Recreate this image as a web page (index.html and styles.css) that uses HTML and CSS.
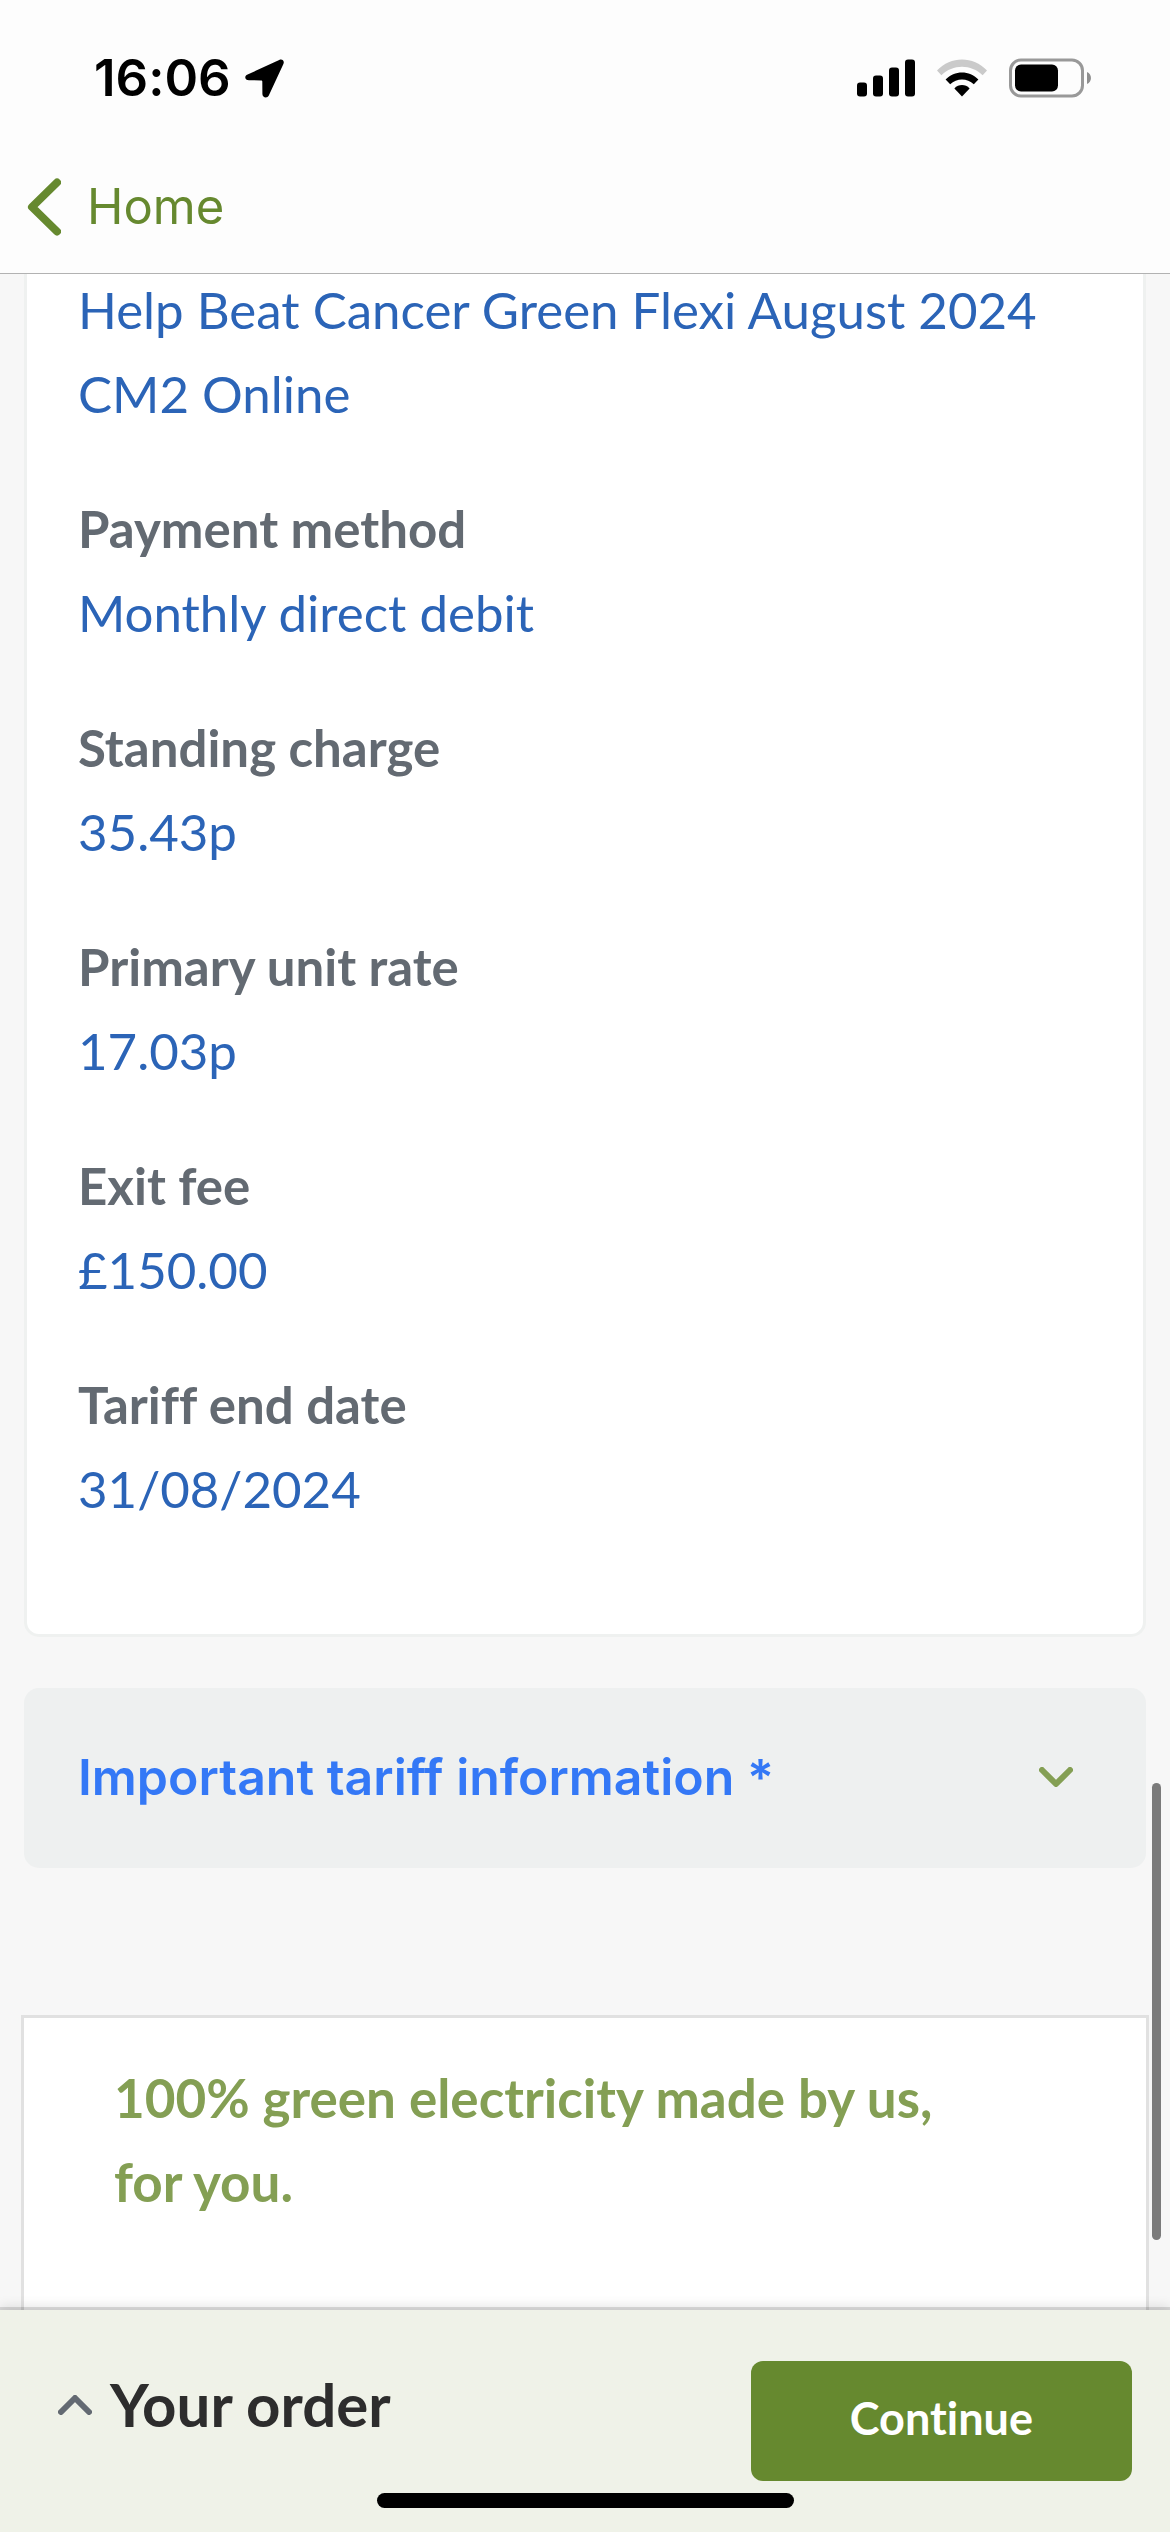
FILE: index.html
```
<!DOCTYPE html>
<html lang="en">
  <head>
    <meta charset="UTF-8" />
    <meta name="viewport" content="width=device-width, initial-scale=1" />
    <title>Your tariff</title>
    <link rel="stylesheet" href="styles.css">
  </head>
  <body>
    <header class="top-bar">
      <div class="status-bar">
        <div class="status-left">
          <span class="time">16:06</span>
          <svg class="location-icon" width="39" height="39" viewBox="0 0 39 39" aria-hidden="true">
            <path d="M2.6 15.6 L34.2 .9 C37.2 -.5 39.8 1.9 38.4 5.1 L23.8 36.6 C22.4 39.6 17.4 39 17.4 35 L17.3 22.6 C17.3 21.7 17 21.4 16.1 21.4 L4 21.3 C-.1 21.2 -1.2 17.3 2.6 15.6 Z" />
          </svg>
        </div>
        <div class="status-right">
          <!-- Signal strength -->
          <svg width="58" height="38" viewBox="0 0 58 38" aria-hidden="true">
            <rect x="0" y="23.5" width="10" height="14" rx="3" />
            <rect x="16" y="16.5" width="10" height="21" rx="3" />
            <rect x="32" y="8.5" width="10" height="29" rx="3" />
            <rect x="48" y="0.5" width="10" height="37" rx="3" />
          </svg>
          <!-- Wifi -->
          <svg width="50" height="38" viewBox="0 0 50 38" aria-hidden="true">
            <path d="M0 11.5 C13.7 -3.3 36.3 -3.3 50 11.5 L45.6 16.2 C34.2 4.8 15.8 4.8 4.4 16.2 Z" fill="#cacaca" />
            <path d="M8.6 20.5 C17.5 11.1 32.5 11.1 41.4 20.5 L36.8 25.2 C30.3 18.9 19.7 18.9 13.2 25.2 Z" />
            <path d="M17.4 29.4 C21.6 25 28.4 25 32.6 29.4 L25 37.6 Z" />
          </svg>
          <!-- Battery -->
          <svg width="82" height="40" viewBox="0 0 82 40" aria-hidden="true">
            <rect x="1.5" y="2" width="72" height="36" rx="10.5" fill="none" stroke="#999" stroke-width="3" />
            <rect x="6" y="6.5" width="43" height="27" rx="6" />
            <path d="M78 14 C83.3 16.3 83.3 23.7 78 26 Z" fill="#8f8f8f" />
          </svg>
        </div>
      </div>
      <nav class="nav-bar">
        <a href="#" class="back-link">
          <svg width="34" height="58" viewBox="0 0 34 58" aria-hidden="true">
            <path d="M30 4.5 L5 29 L30 53.5" />
          </svg>
          Home
        </a>
      </nav>
    </header>

    <main class="content">
      <section class="tariff-card">
        <dl class="tariff-list">
          <dd>Help Beat Cancer Green Flexi August 2024 CM2 Online</dd>
          <dt>Payment method</dt>
          <dd>Monthly direct debit</dd>
          <dt>Standing charge</dt>
          <dd>35.43p</dd>
          <dt>Primary unit rate</dt>
          <dd>17.03p</dd>
          <dt>Exit fee</dt>
          <dd>£150.00</dd>
          <dt>Tariff end date</dt>
          <dd>31/08/2024</dd>
        </dl>
      </section>

      <button type="button" class="info-panel">
        Important tariff information *
        <svg width="34" height="20" viewBox="0 0 34 20" aria-hidden="true">
          <path d="M3 3 L17 17 L31 3" />
        </svg>
      </button>

      <section class="green-card">
        <h2>100% green electricity made by us, for you.</h2>
      </section>

      <div class="scroll-thumb"></div>
    </main>

    <footer class="order-bar">
      <div class="order-row">
        <button type="button" class="order-toggle">
          <svg width="34" height="20" viewBox="0 0 34 20" aria-hidden="true">
            <path d="M3 17 L17 3 L31 17" />
          </svg>
          Your order
        </button>
        <button type="button" class="continue-button">Continue</button>
      </div>
      <div class="home-indicator"></div>
    </footer>
  </body>
</html>
```
FILE: styles.css
```
* {
  box-sizing: border-box;
}

body {
  margin: 0;
  height: 100vh;
  display: flex;
  flex-direction: column;
  overflow: hidden;
  background: #f7f7f7;
  font-family: Lato, sans-serif;
  font-size: 51px;
  line-height: 84px;
  font-variant-ligatures: none;
}

button {
  border: none;
  font-family: inherit;
  font-variant-ligatures: none;
  cursor: pointer;
}

svg {
  display: block;
  flex-shrink: 0;
}

/* Status bar and navigation */
.top-bar {
  flex-shrink: 0;
  background: #fdfdfd;
  border-bottom: 1px solid #b2b2b2;
  font-family: Inter, sans-serif;
}

.status-bar {
  display: flex;
  justify-content: space-between;
  align-items: center;
  padding: 36px 79px 21px 94px;
}

.status-left {
  display: flex;
  align-items: center;
  gap: 14px;
}

.time {
  font-size: 51px;
  font-weight: 600;
}

.status-right {
  display: flex;
  align-items: center;
  gap: 22px;
}

.nav-bar {
  display: flex;
  padding: 24px 27px;
}

.back-link {
  display: flex;
  align-items: center;
  gap: 26px;
  color: #66892f;
  font-size: 49px;
  text-decoration: none;
}

.back-link svg {
  fill: none;
  stroke: #66892f;
  stroke-width: 8;
  stroke-linecap: round;
  stroke-linejoin: round;
}

/* Scrolling content */
.content {
  position: relative;
  flex: 1;
  min-height: 0;
  overflow: hidden;
}

.tariff-card {
  margin: -6px 24px 51px;
  padding: 0 51px 52px;
  background: #fff;
  border: 3px solid #eff1f0;
  border-top: none;
  border-radius: 0 0 15px 15px;
}

.tariff-list {
  margin: 0;
}

.tariff-list dt {
  color: #636a72;
  font-weight: 700;
}

.tariff-list dd {
  margin: 0 0 51px;
  color: #2b64b7;
}

.info-panel {
  display: flex;
  justify-content: space-between;
  align-items: center;
  width: calc(100% - 48px);
  margin: 0 24px 147px;
  padding: 47px 73px 49px 54px;
  background: #eef0f0;
  border-radius: 15px;
  color: #3478f6;
  font-family: Inter, sans-serif;
  font-size: 50px;
  font-weight: 600;
  line-height: 84px;
}

.info-panel svg {
  fill: none;
  stroke: #849f54;
  stroke-width: 6;
  stroke-linecap: round;
  stroke-linejoin: round;
}

.green-card {
  margin: 0 21px;
  padding: 38px 180px 180px 90px;
  background: #fff;
  border: 3px solid #e1e1e1;
}

.green-card h2 {
  margin: 0;
  color: #849f54;
  font-size: 53px;
  font-weight: 700;
}

.scroll-thumb {
  position: absolute;
  right: 9px;
  bottom: 70px;
  width: 9px;
  height: 457px;
  background: #7b7b7b;
  border-radius: 5px;
}

/* Order bar */
.order-bar {
  position: relative;
  flex-shrink: 0;
  padding: 51px 0 24px;
  background: #eff2e8;
  box-shadow: 0 -3px 0 rgba(0, 0, 0, 0.12), 0 -3px 12px rgba(0, 0, 0, 0.12);
}

.order-row {
  display: flex;
  justify-content: space-between;
  align-items: flex-start;
  padding: 0 38px 0 58px;
}

.order-toggle {
  display: flex;
  align-items: center;
  gap: 18px;
  padding: 0;
  background: none;
  color: #2d2d2d;
  font-size: 60px;
  font-weight: 700;
  line-height: 87px;
}

.order-toggle svg {
  fill: none;
  stroke: #636a72;
  stroke-width: 6;
  stroke-linecap: round;
  stroke-linejoin: round;
}

.continue-button {
  padding: 15px 99px 21px;
  background: #66892f;
  border-radius: 12px;
  color: #fff;
  font-size: 45px;
  font-weight: 700;
  line-height: 84px;
}

.home-indicator {
  width: 417px;
  height: 15px;
  margin: 12px auto 0;
  background: #000;
  border-radius: 8px;
}
```
